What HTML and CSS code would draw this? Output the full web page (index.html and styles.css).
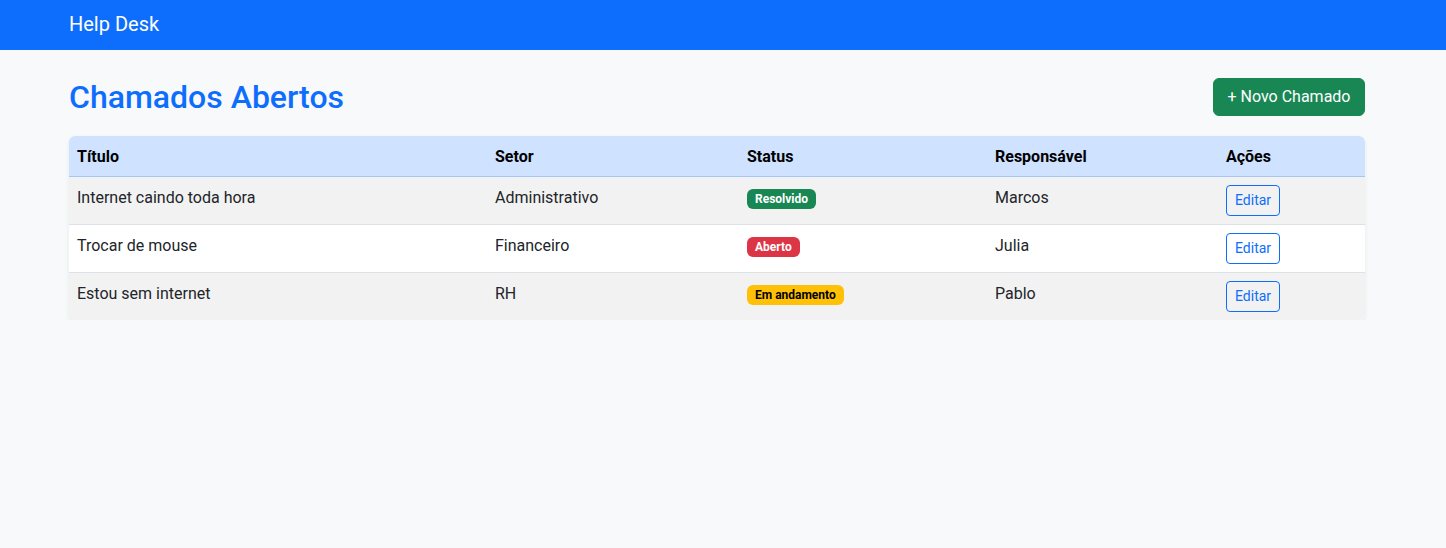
FILE: index.html
```html
<!DOCTYPE html>
<html lang="pt-BR">
<head>
<meta charset="utf-8">
<title>Help Desk</title>
<link rel="stylesheet" href="styles.css">
</head>
<body>
<nav class="navbar">
  <div class="container">
    <span class="brand">Help Desk</span>
  </div>
</nav>
<main class="container page">
  <div class="page-head">
    <h1 class="title">Chamados Abertos</h1>
    <button class="btn btn-success">+ Novo Chamado</button>
  </div>
  <div class="table-wrap">
    <table class="table">
      <colgroup>
        <col class="c1"><col class="c2"><col class="c3"><col class="c4"><col class="c5">
      </colgroup>
      <thead>
        <tr><th>Título</th><th>Setor</th><th>Status</th><th>Responsável</th><th>Ações</th></tr>
      </thead>
      <tbody>
        <tr class="odd"><td>Internet caindo toda hora</td><td>Administrativo</td><td><span class="badge b-success">Resolvido</span></td><td>Marcos</td><td><button class="btn-edit">Editar</button></td></tr>
        <tr><td>Trocar de mouse</td><td>Financeiro</td><td><span class="badge b-danger">Aberto</span></td><td>Julia</td><td><button class="btn-edit">Editar</button></td></tr>
        <tr class="odd"><td>Estou sem internet</td><td>RH</td><td><span class="badge b-warning">Em andamento</span></td><td>Pablo</td><td><button class="btn-edit">Editar</button></td></tr>
      </tbody>
    </table>
  </div>
</main>
</body>
</html>
```
FILE: styles.css
```css
* { box-sizing: border-box; }
body {
  margin: 0;
  background: #f8f9fa;
  color: #212529;
  font-family: Roboto, "Noto Sans", "Liberation Sans", sans-serif;
  font-size: 16px;
  line-height: 1.5;
}
.container {
  width: 1296px;
  margin-left: 69px;
}
.navbar {
  background: #0d6efd;
  height: 50px;
}
.navbar .container {
  height: 50px;
  display: flex;
  align-items: center;
  padding-bottom: 3px;
}
.brand {
  color: #fff;
  font-size: 20px;
  line-height: 30px;
}
.page-head {
  margin-top: 28px;
  margin-bottom: 20px;
  height: 38px;
  display: flex;
  align-items: center;
  justify-content: space-between;
}
.title {
  margin: 0;
  color: #0d6efd;
  font-size: 32px;
  font-weight: 500;
  line-height: 1.2;
}
.btn {
  font: inherit;
  border: 1px solid transparent;
  border-radius: 6px;
  padding: 6px 12px;
  line-height: 24px;
  cursor: pointer;
}
.btn-success {
  background: #198754;
  border-color: #198754;
  color: #fff;
  width: 152px;
}
.table-wrap {
  border-radius: 6px;
  overflow: hidden;
  box-shadow: 0 2px 4px rgba(0,0,0,.075);
}
.table {
  width: 100%;
  border-collapse: collapse;
  table-layout: fixed;
  background: #fff;
}
.c1 { width: 418px; }
.c2 { width: 252px; }
.c3 { width: 248px; }
.c4 { width: 231px; }
.c5 { width: 147px; }
.table th, .table td {
  text-align: left;
  padding: 9px 8px 7px;
  vertical-align: top;
}
.table tbody td { padding-bottom: 8px; }
.table th {
  background: #cfe2ff;
  color: #000;
  font-weight: 700;
  border-bottom: 1px solid #a6c5f7;
}
.table tbody td {
  border-bottom: 1px solid #dee2e6;
}
.table tbody tr:last-child td { border-bottom: none; }
.table tr.odd td { background: #f2f2f2; }
.badge {
  display: inline-block;
  font-size: 12px;
  font-weight: 700;
  line-height: 1;
  padding: 4px 8px;
  border-radius: 6px;
  color: #fff;
  vertical-align: baseline;
}
.b-success { background: #198754; }
.b-danger { background: #dc3545; }
.b-warning { background: #ffc107; color: #000; }
.btn-edit {
  font: inherit;
  font-size: 14px;
  line-height: 21px;
  padding: 4px 8px;
  margin-top: -1px;
  border: 1px solid #0d6efd;
  border-radius: 4px;
  background: transparent;
  color: #0d6efd;
  cursor: pointer;
}
```
